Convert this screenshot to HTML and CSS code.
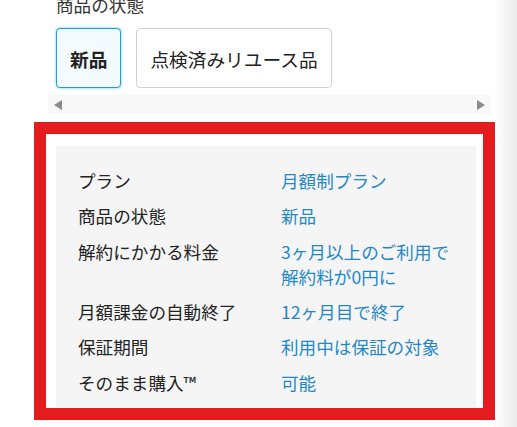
FILE: index.html
```html
<!doctype html>
<html lang="ja">
    <head>
        <meta charset="UTF-8" />
        <meta name="viewport" content="width=device-width, initial-scale=1.0" />
        <title>商品の状態</title>
        <link rel="stylesheet" href="styles.css">
    </head>
    <body>
        <div class="selector">
            <h2 class="selector-title">商品の状態</h2>
            <div class="options">
                <button class="option active" type="button">新品</button>
                <button class="option" type="button">点検済みリユース品</button>
            </div>
            <div class="scrollbar">
                <span class="arrow arrow-left"></span>
                <span class="arrow arrow-right"></span>
            </div>
        </div>

        <div class="highlight">
            <dl class="specs">
                <dt>プラン</dt>
                <dd>月額制プラン</dd>
                <dt>商品の状態</dt>
                <dd>新品</dd>
                <dt>解約にかかる料金</dt>
                <dd>3ヶ月以上のご利用で解約料が0円に</dd>
                <dt>月額課金の自動終了</dt>
                <dd>12ヶ月目で終了</dd>
                <dt>保証期間</dt>
                <dd>利用中は保証の対象</dd>
                <dt>そのまま購入™</dt>
                <dd>可能</dd>
            </dl>
        </div>
    </body>
</html>
```

FILE: styles.css
```css
html {
    background: linear-gradient(to right, #fff 494px, #ebebeb 517px);
}
body {
    font-family: "Noto Sans CJK JP", "Noto Sans", sans-serif;
    color: #222;
    margin: 0;
    overflow: hidden;
}
.selector {
    margin: -8px 26px 0 48px;
}
.selector-title {
    margin: 0;
    padding-left: 8px;
    font-size: 17.6px;
    font-weight: normal;
    line-height: 25px;
    color: #333;
}
.options {
    display: flex;
    gap: 15px;
    padding-left: 8px;
    margin-top: 11px;
}
.option {
    height: 60px;
    padding: 0 13px;
    background: #fff;
    border: 1px solid #d2d2d2;
    border-radius: 4px;
    font-family: inherit;
    font-size: 18.7px;
    color: #222;
    cursor: pointer;
}
.option.active {
    background: #f3fbff;
    border-color: #1a9fdc;
    box-shadow: 0 0 3px rgba(26, 159, 220, 0.6);
    font-weight: bold;
}
.scrollbar {
    display: flex;
    justify-content: space-between;
    align-items: center;
    height: 19px;
    margin-top: 7px;
    padding: 0 6px;
    background: #f8f8f8;
}
.arrow {
    width: 0;
    height: 0;
    border-top: 5px solid transparent;
    border-bottom: 5px solid transparent;
}
.arrow-left {
    border-right: 8px solid #8a8a8a;
}
.arrow-right {
    border-left: 8px solid #8a8a8a;
}
.highlight {
    margin: 8px 22px 0 34px;
    padding: 12px 7px 1px 10px;
    background: #fff;
    border: 12px solid #e31d1d;
}
.specs {
    display: grid;
    grid-template-columns: 203px 1fr;
    row-gap: 10px;
    margin: 0;
    padding: 22px 22px 12px;
    background: #f5f5f5;
    font-size: 17.6px;
    line-height: 25.3px;
}
.specs dt {
    color: #222;
}
.specs dd {
    margin: 0;
    color: #1f88c6;
}
```
